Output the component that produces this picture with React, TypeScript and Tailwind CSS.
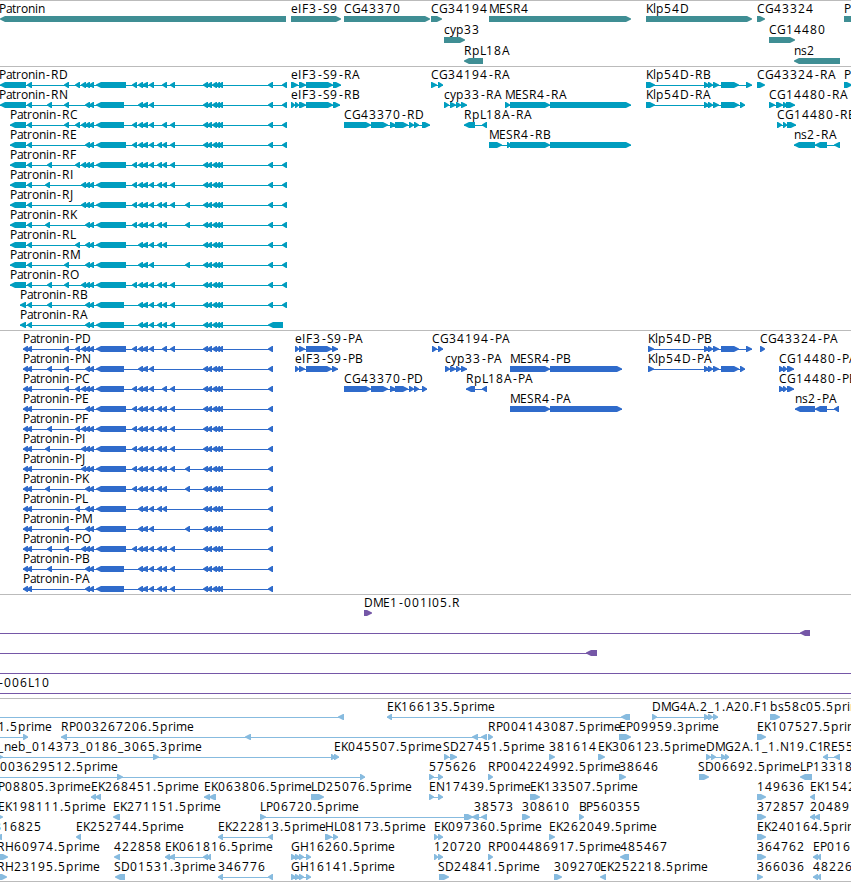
type Span = [number, number]
type Dir = 'l' | 'r'
// row, label, label x, strand, exons
type Feature = [number, string, number, Dir, Span[]]

// Pixel advance of each glyph, so labels keep whole-pixel spacing
const advances: Record<string, number> = {
  A: 8, B: 7, C: 8, D: 9, E: 7, F: 7, G: 9, H: 9, I: 4, J: 4, K: 7, L: 6, M: 10, N: 9, O: 9, P: 7, R: 8, S: 7,
  a: 6, b: 8, c: 6, e: 7, i: 3, l: 3, m: 11, n: 7, o: 7, p: 8, r: 5, s: 6, t: 4, y: 6,
  '-': 6, '.': 4, _: 6,
}

const glyphPositions = (text: string, x: number) => {
  // stemmed capitals start on the pixel after the feature edge
  let pos = x >= 0 && /^[A-Z]/.test(text) && !/^[CGS]/.test(text) ? x + 1 : x
  return text
    .split('')
    .map((ch) => {
      const at = ch === '-' ? pos + 1 : pos
      pos += advances[ch] ?? 8
      return at
    })
    .join(' ')
}

const genes: Feature[] = [
  [0, 'Patronin', -1, 'l', [[0, 286]]],
  [0, 'eIF3-S9', 291, 'r', [[291, 341]]],
  [0, 'CG43370', 344, 'r', [[344, 430]]],
  [0, 'CG34194', 431, 'r', [[431, 442]]],
  [0, 'MESR4', 488, 'r', [[489, 631]]],
  [0, 'Klp54D', 645, 'r', [[646, 752]]],
  [0, 'CG43324', 757, 'r', [[757, 765]]],
  [0, 'P', 843, 'r', [[844, 870]]],
  [1, 'cyp33', 444, 'r', [[444, 465]]],
  [1, 'CG14480', 769, 'r', [[769, 795]]],
  [2, 'RpL18A', 463, 'l', [[464, 483]]],
  [2, 'ns2', 794, 'l', [[794, 840]]],
]

// Exons shared between the Patronin isoforms
const exons: Record<string, Span[]> = {
  q: [[45, 50]],
  p: [[47, 52]],
  a: [[64, 69]],
  b: [[75, 80]],
  c: [[81, 86]],
  d: [[85, 90], [89, 94]],
  B: [[96, 126]],
  S: [[96, 124]],
  e: [[132, 137]],
  f: [[138, 143], [142, 148]],
  g: [[149, 154]],
  h: [[157, 162]],
  i: [[162, 167]],
  j: [[170, 175]],
  k: [[185, 190]],
  m: [[203, 208], [207, 212], [212, 217], [216, 220], [218, 223]],
}

const isoforms: [string, string][] = [
  ['D', 'abcdBefgijm'],
  ['N', 'padSfgm'],
  ['C', 'abcdSefgijm'],
  ['E', 'dBefghijm'],
  ['F', 'pbcdBefghijm'],
  ['I', 'qcdBefghijm'],
  ['J', 'cdBefghijkm'],
  ['K', 'qdBefghikm'],
  ['L', 'bdBfghim'],
  ['M', 'adBfgkm'],
  ['O', 'pacdBefghijm'],
  ['B', 'pdSfghijm'],
  ['A', 'dSfghijm'],
]

const expand = (code: string) => code.split('').flatMap((c) => exons[c])

const transcriptStart = (row: number) => (row < 2 ? 0 : row < 11 ? 10 : 20)

const patroninRna: Feature[] = isoforms.map(([id, code], row) => {
  const start = transcriptStart(row)
  const tail: Span[] = id === 'A' ? [[268, 283]] : [[268, 273], [282, 287]]
  return [row, `Patronin-R${id}`, start - 1, 'l', [[start, 26], [27, 32], ...expand(code), ...tail]]
})

const patroninCds: Feature[] = isoforms.map(([id, code], row) => [
  row, `Patronin-P${id}`, 22, 'l', [[23, 28], [27, 32], ...expand(code), [268, 273]],
])

const klpMiddle: Span[] = [[704, 709], [708, 713], [713, 719], [721, 739]]
const cgMiddle: Span[] = [[344, 371], [371, 388], [390, 396], [395, 408], [409, 414], [414, 419]]

const transcripts: Feature[] = [
  ...patroninRna,
  [0, 'eIF3-S9-RA', 291, 'r', [[291, 298], [299, 306], [306, 333], [333, 341]]],
  [1, 'eIF3-S9-RB', 291, 'r', [[291, 295], [295, 299], [299, 306], [306, 333], [333, 340]]],
  [2, 'CG43370-RD', 344, 'r', [...cgMiddle, [422, 430]]],
  [0, 'CG34194-RA', 431, 'r', [[431, 437], [438, 443]]],
  [1, 'cyp33-RA', 444, 'r', [[444, 449], [450, 456], [456, 461], [461, 467]]],
  [2, 'RpL18A-RA', 463, 'l', [[464, 475], [482, 487]]],
  [1, 'MESR4-RA', 504, 'r', [[505, 510], [510, 550], [550, 631]]],
  [3, 'MESR4-RB', 488, 'r', [[489, 502], [507, 511], [510, 550], [550, 631]]],
  [0, 'Klp54D-RB', 645, 'r', [[646, 655], ...klpMiddle, [746, 752]]],
  [1, 'Klp54D-RA', 645, 'r', [[646, 655], ...klpMiddle, [740, 745]]],
  [0, 'CG43324-RA', 757, 'r', [[757, 765]]],
  [0, 'P', 843, 'r', [[844, 852]]],
  [1, 'CG14480-RA', 769, 'r', [[769, 775], [776, 783], [783, 787], [786, 795]]],
  [2, 'CG14480-RB', 777, 'r', [[777, 782], [783, 787], [787, 796]]],
  [3, 'ns2-RA', 794, 'l', [[794, 815], [815, 827], [834, 840]]],
]

const proteins: Feature[] = [
  ...patroninCds,
  [0, 'eIF3-S9-PA', 295, 'r', [[295, 299], [299, 305], [306, 332], [332, 338]]],
  [1, 'eIF3-S9-PB', 295, 'r', [[295, 299], [299, 305], [306, 332], [332, 338]]],
  [2, 'CG43370-PD', 344, 'r', [...cgMiddle, [422, 427]]],
  [0, 'CG34194-PA', 432, 'r', [[432, 437], [438, 443]]],
  [1, 'cyp33-PA', 445, 'r', [[445, 450], [450, 456], [456, 461], [461, 467]]],
  [2, 'RpL18A-PA', 465, 'l', [[466, 475], [482, 487]]],
  [1, 'MESR4-PB', 509, 'r', [[510, 550], [550, 622]]],
  [3, 'MESR4-PA', 509, 'r', [[510, 550], [550, 622]]],
  [0, 'Klp54D-PB', 647, 'r', [[648, 654], ...klpMiddle, [746, 752]]],
  [1, 'Klp54D-PA', 647, 'r', [[648, 654], ...klpMiddle, [740, 745]]],
  [0, 'CG43324-PA', 760, 'r', [[760, 765]]],
  [1, 'CG14480-PA', 779, 'r', [[779, 784], [783, 787], [787, 794]]],
  [2, 'CG14480-PB', 779, 'r', [[779, 784], [783, 787], [787, 794]]],
  [3, 'ns2-PA', 795, 'l', [[795, 815], [815, 827], [834, 839]]],
]

const bacEnds: Feature[] = [
  [0, 'DME1-001I05.R', 363, 'r', [[364, 372]]],
  [1, '', 0, 'l', [[-20, -10], [800, 810]]],
  [2, '', 0, 'l', [[-20, -10], [586, 597]]],
  [3, '', 0, 'l', [[-20, -10], [860, 870]]],
  [4, '-006L10', -2, 'l', [[-20, -10], [860, 870]]],
]

const ghSpans: Span[] = [[291, 296], [295, 300], [299, 304], [306, 311]]

const ests: Feature[] = [
  [0, '', 0, 'l', [[-20, -10], [338, 344]]],
  [0, 'EK166135.5prime', 386, 'l', [[387, 392], [621, 630]]],
  [0, 'DMG4A.2_1.A20.F1', 651, 'r', [[652, 657], [704, 709], [708, 713], [713, 718]]],
  [0, 'bs58c05.5prime', 770, 'r', [[770, 780]]],
  [1, '1.5prime', -2, 'r', [[-20, -10], [23, 28]]],
  [1, 'RP003267206.5prime', 60, 'l', [[61, 67], [245, 251], [472, 478], [481, 487]]],
  [1, 'RP004143087.5prime', 487, 'r', [[488, 493]]],
  [1, 'EP09959.3prime', 618, 'r', [[619, 631]]],
  [1, 'EK107527.5prime', 756, 'r', [[757, 766]]],
  [2, '_neb_014373_0186_3065.3prime', -2, 'r', [[-3, 3], [153, 159], [331, 335], [334, 339]]],
  [2, 'EK045507.5prime', 333, 'r', []],
  [2, 'SD27451.5prime', 443, 'r', [[444, 449], [450, 457]]],
  [2, '381614', 549, 'r', [[549, 555]]],
  [2, 'EK306123.5prime', 597, 'r', [[598, 605]]],
  [2, 'DMG2A.1_1.N19.C1', 705, 'r', [[706, 711], [711, 716], [721, 726], [725, 729]]],
  [2, 'RE55', 822, 'l', [[823, 828], [834, 840]]],
  [3, '003629512.5prime', 0, 'r', [[-20, -10], [117, 123], [360, 365]]],
  [3, '575626', 429, 'r', [[429, 434], [438, 443]]],
  [3, 'RP004224992.5prime', 487, 'r', [[488, 493]]],
  [3, '38646', 619, 'r', [[619, 626]]],
  [3, 'SD06692.5prime', 698, 'r', [[699, 709]]],
  [3, 'LP13318', 799, 'l', [[800, 812]]],
  [4, 'P08805.3prime', -2, 'l', []],
  [4, 'EK268451.5prime', 90, 'l', [[91, 96], [95, 101]]],
  [4, 'EK063806.5prime', 203, 'l', [[204, 210], [209, 216]]],
  [4, 'LD25076.5prime', 310, 'r', [[311, 324]]],
  [4, 'EN17439.5prime', 428, 'r', [[429, 434], [438, 443]]],
  [4, 'EK133507.5prime', 529, 'r', [[530, 540]]],
  [4, '149636', 757, 'r', [[757, 766]]],
  [4, 'EK1542', 809, 'l', [[810, 815]]],
  [5, 'EK198111.5prime', -2, 'r', [[-3, 3]]],
  [5, 'EK271151.5prime', 112, 'l', [[113, 120]]],
  [5, 'LP06720.5prime', 259, 'r', [[260, 266], [464, 473]]],
  [5, '38573', 474, 'l', [[472, 479], [481, 487]]],
  [5, '308610', 522, 'r', [[522, 530]]],
  [5, 'BP560355', 578, 'r', [[579, 584]]],
  [5, '372857', 757, 'r', [[757, 766]]],
  [5, '20489', 810, 'l', [[810, 815], [814, 820]]],
  [6, '316825', -6, 'l', [[-4, 2]]],
  [6, 'EK252744.5prime', 75, 'l', [[76, 81]]],
  [6, 'EK222813.5prime', 217, 'l', [[218, 223], [268, 273]]],
  [6, 'HL08173.5prime', 324, 'r', [[325, 332], [333, 338]]],
  [6, 'EK097360.5prime', 433, 'r', [[434, 438], [438, 443]]],
  [6, 'EK262049.5prime', 548, 'r', [[549, 555]]],
  [6, 'EK240164.5prime', 756, 'r', [[757, 766]]],
  [7, 'RH60974.5prime', -3, 'r', [[-5, 8]]],
  [7, '422858', 114, 'l', [[114, 120]]],
  [7, 'EK061816.5prime', 164, 'l', [[165, 170], [169, 175], [203, 208], [207, 211]]],
  [7, 'GH16260.5prime', 291, 'r', ghSpans],
  [7, '120720', 434, 'r', [[434, 438], [438, 443]]],
  [7, 'RP004486917.5prime', 487, 'r', [[488, 493]]],
  [7, '485467', 620, 'l', [[620, 629]]],
  [7, '364762', 757, 'r', [[757, 766]]],
  [7, 'EP016', 812, 'l', [[813, 818], [817, 821]]],
  [8, 'RH23195.5prime', -3, 'r', [[-5, 7]]],
  [8, 'SD01531.3prime', 114, 'l', [[115, 125]]],
  [8, '346776', 218, 'l', [[218, 223], [268, 273]]],
  [8, 'GH16141.5prime', 291, 'r', ghSpans],
  [8, 'SD24841.5prime', 438, 'r', [[439, 449]]],
  [8, '309270', 554, 'r', [[554, 562]]],
  [8, 'EK252218.5prime', 599, 'l', [[600, 606]]],
  [8, '366036', 757, 'r', [[757, 763]]],
  [8, '48226', 813, 'l', [[813, 818], [817, 821]]],
]

const arrow = ([start, end]: Span, dir: Dir, y: number) => {
  const head = Math.min(5, end - start - 1)
  return dir === 'l'
    ? `M${start} ${y + 2.4}L${start + head} ${y}H${end}V${y + 6}H${start + head}L${start} ${y + 3.6}Z`
    : `M${end} ${y + 2.4}L${end - head} ${y}H${start}V${y + 6}H${end - head}L${end} ${y + 3.6}Z`
}

interface TrackProps {
  features: Feature[]
  className: string
  height: number
  pitch?: number
  first?: number
}

function Track({ features, className, height, pitch = 20, first = 15 }: TrackProps) {
  return (
    <section className="border-t border-[#bbbbbb]">
      <svg width="851" height={height} className={`block overflow-hidden ${className}`}>
        {features.map(([row, label, labelX, dir, spans], index) => {
          const y = first + row * pitch
          return (
            <g key={index}>
              {spans.length > 1 && (
                <rect
                  x={spans[0][0]}
                  y={y + 3}
                  width={spans[spans.length - 1][1] - spans[0][0]}
                  height="1"
                />
              )}
              <path d={spans.map((span) => arrow(span, dir, y)).join('')} />
              {label && (
                <text x={glyphPositions(label, labelX)} y={y - 3} className="fill-black">
                  {label}
                </text>
              )}
            </g>
          )
        })}
      </svg>
    </section>
  )
}

export default function App() {
  return (
    <main className="w-[851px] h-[882px] overflow-hidden bg-white border-b border-[#bbbbbb] font-['Open_Sans',sans-serif] text-[12px]">
      <Track features={genes} className="fill-[#3f8e94]" height={65} pitch={21} />
      <Track features={transcripts} className="fill-[#009dbf]" height={263} />
      <Track features={proteins} className="fill-[#2f6bcb]" height={263} />
      <Track features={bacEnds} className="fill-[#7557a7]" height={103} />
      <Track features={ests} className="fill-[#87bbdf]" height={182} />
    </main>
  )
}
